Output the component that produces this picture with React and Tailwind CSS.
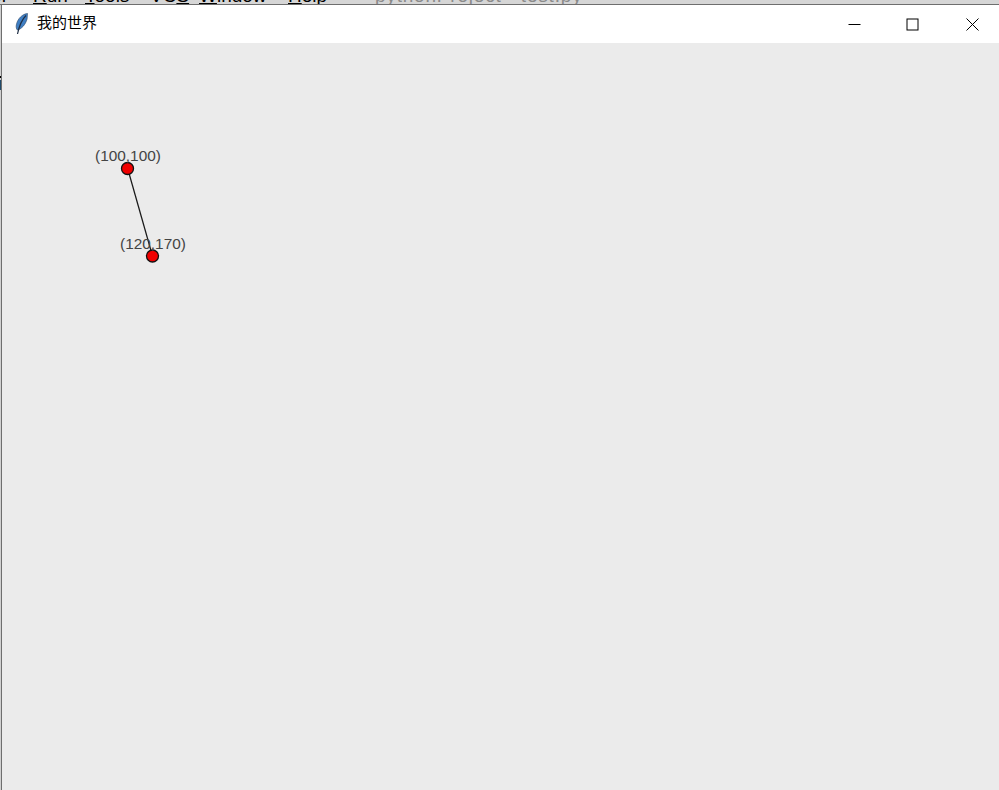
export default function App() {
  return (
    <div className="w-[999px] h-[790px] overflow-hidden flex flex-col bg-[#ebebeb] font-['Liberation_Sans','Noto_Sans_CJK_SC',sans-serif]">
      <div className="h-[5px] shrink-0 overflow-hidden bg-[#d6d6d6] border-b border-[#6e6e6e] flex text-[19px] leading-[22px] text-black">
        <div className="flex -mt-[15px]">
          <span className="w-[33px] flex justify-end pr-[25px] whitespace-nowrap">Refactor</span>
          <span className="w-[52px]"><u>R</u>un</span>
          <span className="w-[65px]"><u>T</u>ools</span>
          <span className="w-[49px]">VC<u>S</u></span>
          <span className="w-[89px]"><u>W</u>indow</span>
          <span className="w-[87px]"><u>H</u>elp</span>
          <span className="text-[#8a8a8a] whitespace-nowrap tracking-[0.8px]">pythonProject - test.py</span>
        </div>
      </div>
      <div className="flex-1 flex min-h-0">
        <div className="w-px shrink-0 bg-[#d0d0d0] flex flex-col">
          <div className="h-[71px]" />
          <div className="h-[2px] bg-black" />
          <div className="h-[2px]" />
          <div className="h-[10px] bg-[#1f4a6a]" />
        </div>
        <div className="flex-1 flex flex-col min-w-0 border-l border-l-[#6e6e6e]">
          <div className="h-[38px] shrink-0 bg-white flex items-center">
            <svg className="ml-[12px] w-[15px] h-[22px] -mt-px" viewBox="0 0 14 22">
              <path d="M13 0.5 C8 1 3 5.5 1.8 12 C1.4 14.2 1.9 16 2.8 17 C7.2 16 11 11.5 12.6 6 Z" fill="#3f7fc4" stroke="#2a4566" strokeWidth="0.6" />
              <path d="M11.5 2.5 C8 6 5 11 3 21" stroke="#1f2f45" strokeWidth="1.2" fill="none" />
            </svg>
            <span className="ml-[8px] -mt-px text-[15px] text-black">我的世界</span>
            <div className="ml-auto flex items-center h-full">
              <div className="w-[58px] flex justify-center pr-px">
                <svg width="13" height="13" viewBox="0 0 13 13"><path d="M0.5 6.5H12.5" stroke="#000" fill="none" /></svg>
              </div>
              <div className="w-[58px] flex justify-center pr-px">
                <svg width="13" height="13" viewBox="0 0 13 13"><rect x="1" y="1" width="11" height="11" stroke="#000" fill="none" /></svg>
              </div>
              <div className="w-[57px] pl-[24px] flex">
                <svg width="13" height="13" viewBox="0 0 13 13"><path d="M0.5 0.5L12.5 12.5M12.5 0.5L0.5 12.5" stroke="#000" fill="none" /></svg>
              </div>
            </div>
          </div>
          <div className="relative flex-1 bg-[#ebebeb]">
            <svg className="absolute left-0 top-0 w-[300px] h-[300px]" viewBox="0 0 300 300">
              <line x1="125.5" y1="125" x2="150.5" y2="213" stroke="#1a1a1a" strokeWidth="1.25" />
              <circle cx="125.5" cy="125.5" r="6" fill="#f00000" stroke="#111" strokeWidth="1.3" />
              <circle cx="150.5" cy="213" r="6" fill="#f00000" stroke="#111" strokeWidth="1.3" />
            </svg>
            <span className="absolute left-[93px] top-[104px] text-[15.4px] leading-[17px] text-[#444]">(100,100)</span>
            <span className="absolute left-[118px] top-[192px] text-[15.4px] leading-[17px] text-[#444]">(120,170)</span>
          </div>
        </div>
      </div>
    </div>
  );
}
